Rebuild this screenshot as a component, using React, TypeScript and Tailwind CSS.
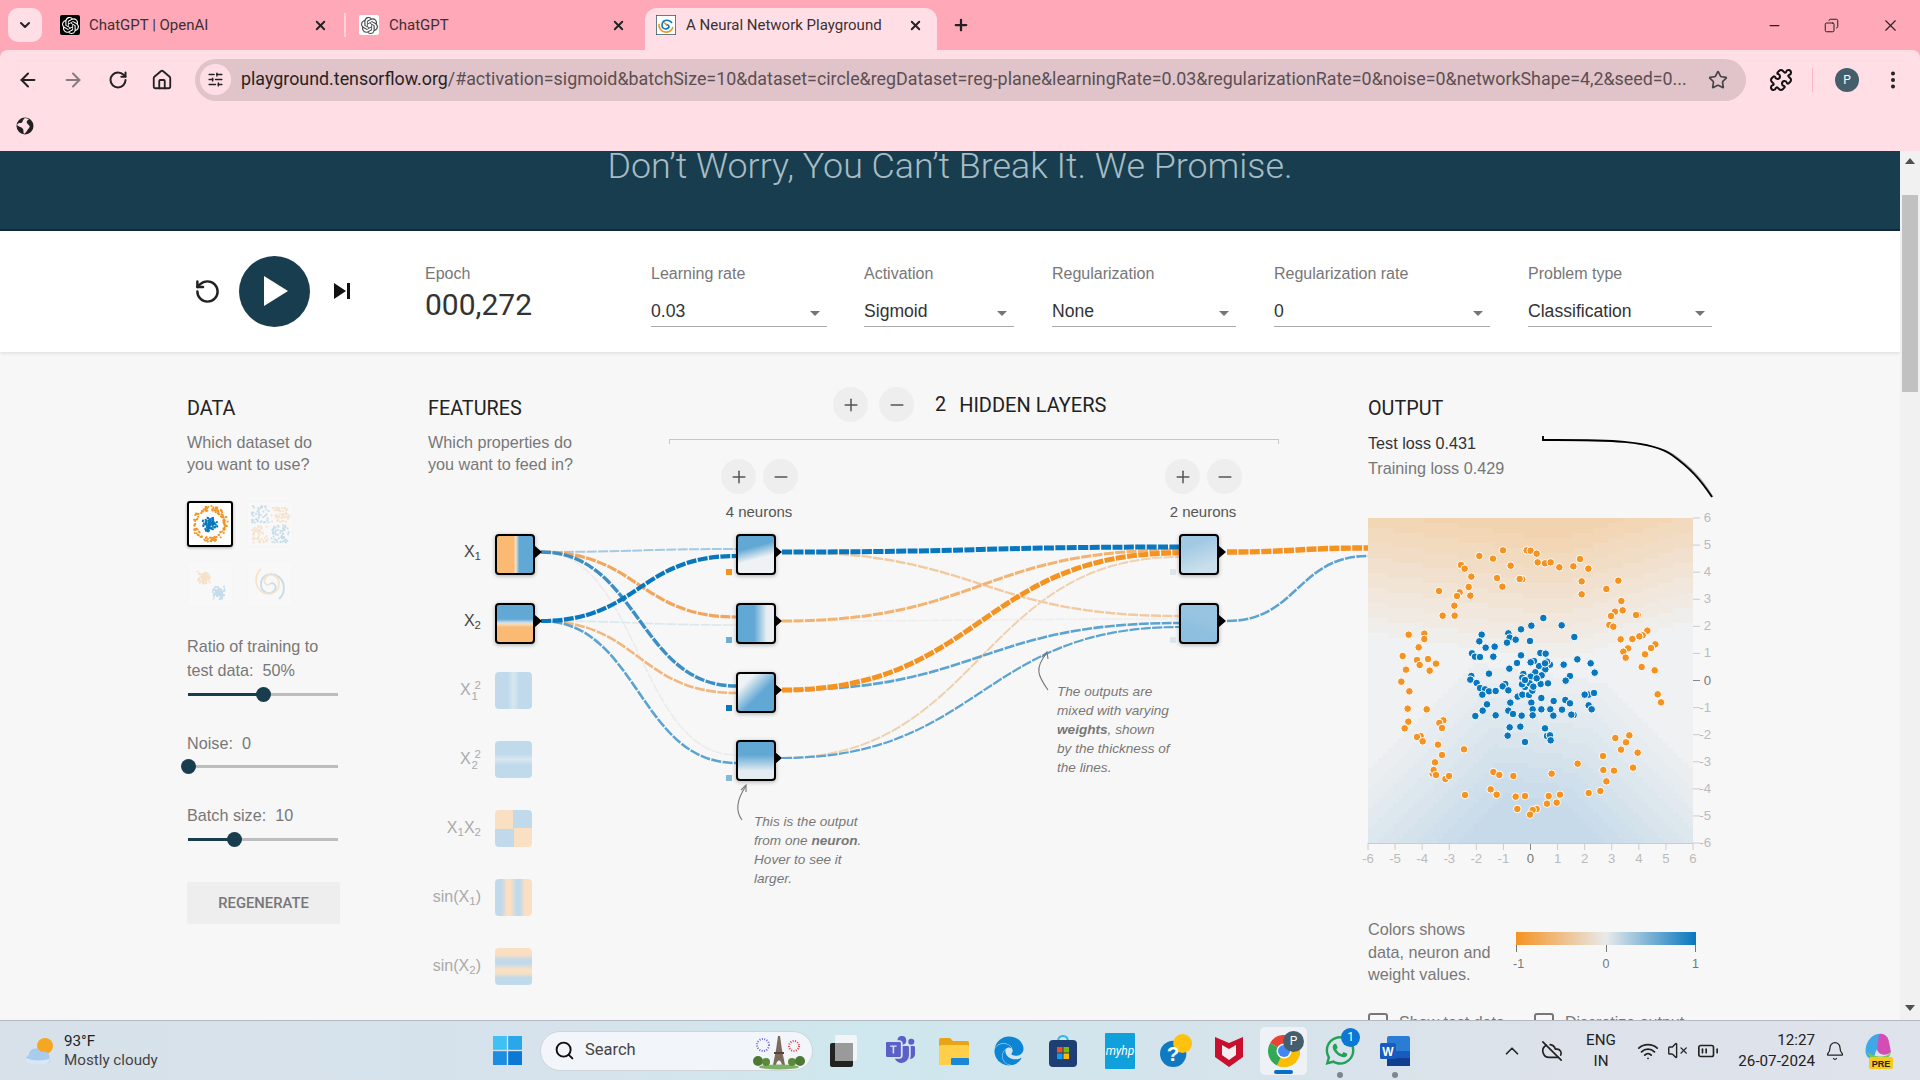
import React from 'react';
import { ArrowLeft, ArrowRight, RotateCw, House, Star, Puzzle, EllipsisVertical, SlidersHorizontal, ChevronDown, X, Plus, Minus, Copy, Search, ChevronUp, CloudOff, Wifi, VolumeX, BatteryMedium, Bell, RotateCcw } from 'lucide-react';
import { SiOpenai } from 'react-icons/si';
import { FaEdge, FaWhatsapp } from 'react-icons/fa';
import { BsMicrosoftTeams } from 'react-icons/bs';

const ARIAL = 'font-["Liberation_Sans",Arial,sans-serif]';

function rng(seed: number) {
  let s = seed;
  return () => {
    s = (s * 16807) % 2147483647;
    return (s - 1) / 2147483646;
  };
}

function Favicon({ kind }: { kind: 'dark' | 'light' | 'spiral' }) {
  if (kind === 'spiral') {
    return (
      <svg width="20" height="20" viewBox="0 0 20 20" className="shrink-0">
        <rect width="20" height="20" fill="#fff" stroke="#33525f" strokeWidth="1.5" />
        <path d="M10 10 a2 2 0 0 1 3 2 a4 4 0 0 1 -6 1 a5 5 0 0 1 1 -7 a6 6 0 0 1 8 2" fill="none" stroke="#0877bd" strokeWidth="1.6" />
        <path d="M10 10 a2 2 0 0 0 -2 -2 M3 9 a7 7 0 0 0 6 8 a7 7 0 0 0 8 -5" fill="none" stroke="#f59322" strokeWidth="1.6" />
      </svg>
    );
  }
  return (
    <div className={`w-5 h-5 shrink-0 flex items-center justify-center rounded-[2px] ${kind === 'dark' ? 'bg-black text-white' : 'bg-white text-[#444]'}`}>
      <SiOpenai size={17} />
    </div>
  );
}

function TabStrip() {
  return (
    <div className="h-[50px] bg-[#ffa9b8] flex items-end shrink-0 font-['Roboto',sans-serif] text-[15px] text-[#3b2f33]">
      <div className="w-[34px] h-[34px] ml-[8px] mb-[8px] rounded-[10px] bg-[#ffdfe5] flex items-center justify-center">
        <ChevronDown size={16} strokeWidth={3} className="text-[#222]" />
      </div>
      <div className="w-[302px] h-[42px] pl-[18px] pr-[16px] pb-[8px] flex items-center">
        <Favicon kind="dark" />
        <span className="ml-[9px] flex-1">ChatGPT | OpenAI</span>
        <X size={15} strokeWidth={3} className="text-[#222]" />
      </div>
      <div className="w-[2px] h-[24px] mb-[13px] bg-[#ffd3da]" />
      <div className="w-[299px] h-[42px] pl-[13px] pr-[19px] pb-[8px] flex items-center">
        <Favicon kind="light" />
        <span className="ml-[10px] flex-1">ChatGPT</span>
        <X size={15} strokeWidth={3} className="text-[#222]" />
      </div>
      <div className="w-[292px] h-[42px] pl-[11px] pr-[14px] pb-[8px] flex items-center bg-[#ffdfe5] rounded-t-[12px]">
        <Favicon kind="spiral" />
        <span className="ml-[10px] flex-1 text-[#3b2f33]">A Neural Network Playground</span>
        <X size={15} strokeWidth={3} className="text-[#222]" />
      </div>
      <div className="h-[42px] ml-[15px] pb-[8px] flex items-center">
        <Plus size={18} strokeWidth={3} className="text-[#222]" />
      </div>
      <div className="flex-1" />
      <div className="h-[50px] flex items-center pr-[20px] gap-[42px] text-[#222]">
        <Minus size={15} strokeWidth={2} />
        <Copy size={15} strokeWidth={1.6} className="-scale-x-100" />
        <X size={19} strokeWidth={1.4} />
      </div>
    </div>
  );
}

function Toolbar() {
  return (
    <div className="bg-[#ffdfe5] shrink-0 h-[101px] rounded-t-[8px] font-['Roboto',sans-serif]">
      <div className="h-[59px] flex items-center text-[#222]">
        <ArrowLeft size={22} strokeWidth={2.2} className="ml-[17px]" />
        <ArrowRight size={22} strokeWidth={2.2} className="ml-[23px] text-[#8a7b80]" />
        <RotateCw size={20} strokeWidth={2.4} className="ml-[24px]" />
        <House size={22} strokeWidth={2} className="ml-[23px]" />
        <div className="ml-[22px] w-[1551px] h-[42px] rounded-full bg-[#e0c4c9] flex items-center pl-[5px]">
          <div className="w-[31px] h-[31px] rounded-full bg-[#ffdfe5] flex items-center justify-center">
            <SlidersHorizontal size={17} strokeWidth={2} className="text-[#222]" />
          </div>
          <div className="ml-[10px] w-[1450px] text-[17.85px] whitespace-nowrap">
            <span className="text-[#2a1f22]">playground.tensorflow.org</span>
            <span className="text-[#5c4f53]">/#activation=sigmoid&amp;batchSize=10&amp;dataset=circle&amp;regDataset=reg-plane&amp;learningRate=0.03&amp;regularizationRate=0&amp;noise=0&amp;networkShape=4,2&amp;seed=0...</span>
          </div>
          <Star size={20} strokeWidth={2} className="ml-[17px] text-[#444]" />
        </div>
        <Puzzle size={24} strokeWidth={2} className="ml-[23px] text-[#111]" />
        <div className="ml-[19px] w-[1px] h-[24px] bg-[#ffb6c2]" />
        <div className="ml-[22px] w-[24px] h-[24px] rounded-full bg-[#455e6b] text-white text-[12px] flex items-center justify-center">P</div>
        <EllipsisVertical size={22} strokeWidth={2.4} className="ml-[23px] text-[#222]" />
      </div>
      <div className="h-[42px] pt-[8px] pl-[16px]">
        <svg width="18" height="18" viewBox="0 0 18 18">
          <circle cx="9" cy="9" r="8.5" fill="#202124" />
          <path d="M9 1 C6 3 7 6 5 6 C3 6 2 6 1 8 C3 10 6 10 7 12 C8 14 7 16 8 17 C11 15 11 13 13 11 C15 9 12 8 11 6 C10 4 12 3 13 2Z" fill="#ffdfe5" />
        </svg>
      </div>
    </div>
  );
}

function ControlSelect({ label, value, widthClass, mlClass }: { label: string; value: string; widthClass: string; mlClass: string }) {
  return (
    <div className={`${widthClass} ${mlClass} shrink-0`}>
      <div className="text-[16px] leading-[20px] text-[#777]">{label}</div>
      <div className="mt-[15px] h-[28px] border-b border-[#aaa] flex justify-between items-start pr-[7px]">
        <span className="text-[17.6px] leading-[22px] text-[#333] mt-[1px]">{value}</span>
        <svg width="10" height="5" viewBox="0 0 10 5" className="mt-[12px]"><path d="M0 0H10L5 5Z" fill="#757575" /></svg>
      </div>
    </div>
  );
}

function Controls() {
  return (
    <div className={`h-[121px] bg-white shrink-0 relative shadow-[0_1px_4px_rgba(0,0,0,0.12)] flex ${ARIAL}`}>
      <div className="flex items-center ml-[193px] -mt-[1px]">
        <RotateCcw size={27} strokeWidth={2.2} className="text-[#222] ml-[1px]" />
        <div className="ml-[18px] w-[71px] h-[71px] rounded-full bg-[#183d4e] flex items-center justify-center">
          <svg width="24" height="30" viewBox="0 0 24 30" className="ml-[3px]"><path d="M0 0L24 15L0 30Z" fill="#fff" /></svg>
        </div>
        <svg width="18" height="20" viewBox="0 0 18 20" className="ml-[24px]"><path d="M0 2L12 10L0 18Z" fill="#111" /><rect x="13" y="2" width="3" height="16" fill="#111" /></svg>
      </div>
      <div className="ml-[73px] w-[226px] shrink-0 pt-[33px]">
        <div className="text-[16px] leading-[20px] text-[#777]">Epoch</div>
        <div className="text-[30px] leading-[36px] mt-[3px] text-[#333] font-['Roboto',sans-serif]">000,272</div>
      </div>
      <div className="flex items-start pt-[33px]">
        <ControlSelect label="Learning rate" value="0.03" widthClass="w-[176px]" mlClass="ml-0" />
        <ControlSelect label="Activation" value="Sigmoid" widthClass="w-[150px]" mlClass="ml-[37px]" />
        <ControlSelect label="Regularization" value="None" widthClass="w-[184px]" mlClass="ml-[38px]" />
        <ControlSelect label="Regularization rate" value="0" widthClass="w-[216px]" mlClass="ml-[38px]" />
        <ControlSelect label="Problem type" value="Classification" widthClass="w-[184px]" mlClass="ml-[38px]" />
      </div>
    </div>
  );
}

function Thumb({ kind, active }: { kind: 'circle' | 'xor' | 'gauss' | 'spiral'; active?: boolean }) {
  const r = rng(kind.length * 7919 + 13);
  const dots: { x: number; y: number; c: string }[] = [];
  const O = '#f59322';
  const B = '#0877bd';
  if (kind === 'circle') {
    for (let i = 0; i < 130; i++) { const a = r() * 6.283; const d = 13 + r() * 5; dots.push({ x: 20 + Math.cos(a) * d, y: 20 + Math.sin(a) * d, c: O }); }
    for (let i = 0; i < 110; i++) { const a = r() * 6.283; const d = r() * 8; dots.push({ x: 20 + Math.cos(a) * d, y: 20 + Math.sin(a) * d, c: B }); }
  } else if (kind === 'xor') {
    for (let i = 0; i < 240; i++) { const x = 2 + r() * 37; const y = 2 + r() * 37; if (Math.abs(x - 20) < 1.2 || Math.abs(y - 20) < 1.2) continue; dots.push({ x, y, c: (x - 20) * (y - 20) > 0 ? B : O }); }
  } else if (kind === 'gauss') {
    for (let i = 0; i < 90; i++) dots.push({ x: 14 + (r() + r() - 1) * 7, y: 14 + (r() + r() - 1) * 7, c: O });
    for (let i = 0; i < 90; i++) dots.push({ x: 29 + (r() + r() - 1) * 7, y: 29 + (r() + r() - 1) * 7, c: B });
  }
  return (
    <div className={`w-[46px] h-[46px] rounded-[3px] bg-white flex items-center justify-center ${active ? 'border-2 border-black shadow-[0_1px_3px_rgba(0,0,0,0.3)]' : 'border border-[#eee] opacity-[0.2]'}`}>
      <svg width="42" height="42" viewBox="0 0 42 42">
        {dots.map((d, i) => <rect key={i} x={d.x} y={d.y} width="1.8" height="1.8" fill={d.c} />)}
        {kind === 'spiral' && (
          <g fill="none" strokeWidth="1.8">
            <path d="M21 21 C25 18 29 24 25 28 C20 33 12 29 12 21 C12 12 23 8 30 14 C37 20 36 31 30 36" stroke={B} />
            <path d="M21 21 C17 24 13 18 17 14 C22 9 30 13 30 21 C30 30 19 34 12 28 C5 22 6 11 12 6" stroke={O} />
          </g>
        )}
      </svg>
    </div>
  );
}

function Slider({ fill, thumb }: { fill: string; thumb: string }) {
  return (
    <div className="h-[16px] relative flex items-center w-[150px] ml-[1px]">
      <div className="w-full h-[3px] bg-[#bdbdbd] relative">
        <div className={`h-full bg-[#183d4e] ${fill}`} />
      </div>
      <div className={`absolute top-[0.5px] w-[15px] h-[15px] rounded-full bg-[#183d4e] ${thumb}`} />
    </div>
  );
}

function DataColumn() {
  return (
    <div className={`w-[241px] shrink-0 pt-[45px] ${ARIAL}`}>
      <div className="font-['Roboto',sans-serif] text-[19.8px] leading-[24px] text-[#222]">DATA</div>
      <div className="mt-[10px] text-[16.2px] leading-[22px] text-[#777]">Which dataset do<br />you want to use?</div>
      <div className="mt-[26px] grid grid-cols-[46px_46px] gap-x-[14px] gap-y-[14px]">
        <Thumb kind="circle" active />
        <Thumb kind="xor" />
        <Thumb kind="gauss" />
        <Thumb kind="spiral" />
      </div>
      <div className="mt-[27px] text-[16.2px] leading-[24px] text-[#777]">Ratio of training to<br />test data:&nbsp; 50%</div>
      <div className="mt-[4px]"><Slider fill="w-[50%]" thumb="left-[68px]" /></div>
      <div className="mt-[30px] text-[16.2px] leading-[22px] text-[#777]">Noise:&nbsp; 0</div>
      <div className="mt-[4px]"><Slider fill="w-0" thumb="left-[-7px]" /></div>
      <div className="mt-[30px] text-[16.2px] leading-[22px] text-[#777]">Batch size:&nbsp; 10</div>
      <div className="mt-[5px]"><Slider fill="w-[31%]" thumb="left-[39px]" /></div>
      <div className="mt-[35px] w-[153px] h-[42px] pt-[1px] rounded-[2px] bg-[#eeeeee] flex items-center justify-center font-['Roboto',sans-serif] font-medium text-[14.8px] text-[#777]">REGENERATE</div>
    </div>
  );
}

function Sc({ sub, sup }: { sub: string; sup?: string }) {
  if (sup) {
    return (
      <span className="inline-flex flex-col text-[11.5px] leading-[11px] align-middle ml-[1px]">
        <span className="ml-[3px]">{sup}</span>
        <span>{sub}</span>
      </span>
    );
  }
  return <sub className="text-[11.5px] leading-none">{sub}</sub>;
}

function FeatureRow({ label, tile, active }: { label: React.ReactNode; tile: string; active?: boolean }) {
  return (
    <div className="h-[42px] flex items-start">
      <div className={`w-[53px] h-[42px] flex items-center justify-end text-[16px] whitespace-nowrap -mt-[3px] ${active ? 'text-[#444]' : 'text-[#aaa]'}`}>
        <span>{label}</span>
      </div>
      <div className={`ml-[14px] ${tile} ${active ? 'w-[40px] h-[41px] border-2 border-black rounded-[4px] shadow-[0_1px_4px_rgba(0,0,0,0.3)]' : 'w-[37px] h-[37px] rounded-[4px]'}`} />
    </div>
  );
}

function FeaturesColumn() {
  return (
    <div className={`w-[140px] shrink-0 pt-[45px] ${ARIAL}`}>
      <div className="font-['Roboto',sans-serif] text-[19.8px] leading-[24px] text-[#222]">FEATURES</div>
      <div className="mt-[10px] text-[16.2px] leading-[22px] text-[#777] whitespace-nowrap">Which properties do<br />you want to feed in?</div>
      <div className="mt-[59px] flex flex-col gap-[27px]">
        <FeatureRow active label={<>X<Sc sub="1" /></>} tile="bg-[linear-gradient(to_right,#fbba74_47%,#f4e3cf_52%,#62a8d5_62%)]" />
        <FeatureRow active label={<>X<Sc sub="2" /></>} tile="bg-[linear-gradient(to_bottom,#62a8d5_38%,#cfe0ea_48%,#f8d9b6_52%,#fbba74_60%)]" />
        <FeatureRow label={<>X<Sc sub="1" sup="2" /></>} tile="bg-[linear-gradient(to_right,#c0daec_35%,#d9e7f0_50%,#c0daec_65%)]" />
        <FeatureRow label={<>X<Sc sub="2" sup="2" /></>} tile="bg-[linear-gradient(to_bottom,#c0daec_35%,#d9e7f0_50%,#c0daec_65%)]" />
        <FeatureRow label={<>X<Sc sub="1" />X<Sc sub="2" /></>} tile="bg-[conic-gradient(from_0deg_at_50%_50%,#c0daec_0_25%,#fbdfc2_25%_50%,#c0daec_50%_75%,#fbdfc2_75%)]" />
        <FeatureRow label={<>sin(X<Sc sub="1" />)</>} tile="bg-[linear-gradient(to_right,#c0daec_0%,#c0daec_18%,#fbdfc2_32%,#fbdfc2_42%,#c0daec_58%,#c0daec_68%,#fbdfc2_80%,#fbdfc2_100%)]" />
        <FeatureRow label={<>sin(X<Sc sub="2" />)</>} tile="bg-[linear-gradient(to_bottom,#fbdfc2_0%,#fbdfc2_18%,#c0daec_32%,#c0daec_42%,#fbdfc2_58%,#fbdfc2_68%,#c0daec_80%,#c0daec_100%)]" />
      </div>
    </div>
  );
}

function CircleBtn({ kind, pos }: { kind: 'plus' | 'minus'; pos: string }) {
  return (
    <div className={`w-[35px] h-[35px] rounded-full bg-[#eeeeee] flex items-center justify-center text-[#555] ${pos}`}>
      {kind === 'plus' ? <Plus size={20} strokeWidth={1.8} /> : <Minus size={20} strokeWidth={1.8} />}
    </div>
  );
}

type L = [number, number, number, number, string, number];
const LINKS: L[] = [
  [541, 552, 736, 755, '#ebebeb', 1.5],
  [541, 621, 736, 625, '#dbe7ee', 1.6],
  [541, 552, 736, 549, '#a4c9e2', 2],
  [541, 621, 736, 693, '#f2b67e', 2.6],
  [541, 621, 736, 763, '#5ba3d0', 2.6],
  [541, 552, 736, 617, '#f3a65a', 3.2],
  [541, 552, 736, 686, '#3b8fc4', 3.4],
  [541, 621, 736, 556, '#0877bd', 4.2],
  [782, 621, 1179, 619, '#eeeeee', 1.6],
  [782, 552, 1179, 616, '#f1ca9f', 2.4],
  [782, 758, 1179, 557, '#eed1af', 2],
  [782, 758, 1179, 627, '#5ba3d0', 2.2],
  [782, 690, 1179, 623, '#5ba3d0', 2.6],
  [782, 621, 1179, 550, '#f3b26f', 3],
  [782, 690, 1179, 553, '#f59322', 5],
  [782, 552, 1179, 547, '#0877bd', 5],
  [1227, 621, 1368, 556, '#5ba3d0', 2.6],
  [1227, 552, 1368, 548, '#f59322', 5.4],
];

function Links() {
  const tris: [number, number][] = [[535, 552], [535, 621], [775, 552], [775, 621], [775, 690], [775, 758], [1219, 552], [1219, 621]];
  return (
    <svg className="absolute left-0 top-0 pointer-events-none" width="940" height="668" viewBox="428 352 940 668">
      {LINKS.map(([x0, y0, x1, y1, c, w], i) => {
        const m = (x0 + x1) / 2;
        return <path key={i} d={`M${x0} ${y0} C${m} ${y0} ${m} ${y1} ${x1} ${y1}`} fill="none" stroke={c} strokeWidth={w} strokeDasharray="10 1.4" />;
      })}
      {tris.map(([x, y], i) => <polygon key={i} points={`${x},${y - 6} ${x + 7},${y} ${x},${y + 6}`} fill="#000" />)}
      <g fill="none" stroke="#777" strokeWidth="1.1">
        <path d="M742 820 C736 812 735 802 746 786" />
        <path d="M741 790 L746 785 L746 792" />
        <path d="M1048 690 C1038 676 1034 668 1047 653" />
        <path d="M1042 657 L1047 652 L1048 659" />
      </g>
    </svg>
  );
}

function Neuron({ pos, bg }: { pos: string; bg: string }) {
  return <div className={`absolute w-[40px] h-[41px] rounded-[4px] border-2 border-black shadow-[0_1px_4px_rgba(0,0,0,0.3)] ${pos} ${bg}`} />;
}
function Sq({ pos, color }: { pos: string; color: string }) {
  return <div className={`absolute w-[6px] h-[6px] ${pos} ${color}`} />;
}

function Network() {
  return (
    <div className={`relative w-[940px] h-[668px] shrink-0 flex ${ARIAL}`}>
      <FeaturesColumn />
      <div className="pt-[35px] ml-[265px] relative z-10 flex items-center h-[70px]">
        <CircleBtn kind="plus" pos="" />
        <CircleBtn kind="minus" pos="ml-[11px]" />
        <span className="ml-[21px] font-['Roboto',sans-serif] text-[19.8px] text-[#222]">2</span>
        <span className="ml-[13px] font-['Roboto',sans-serif] text-[20px] text-[#222]">HIDDEN LAYERS</span>
      </div>
      <div className="absolute left-[241px] top-[87px] w-[610px] h-[5px] border-t border-x border-[#c7c7c7]" />
      <Links />
      <CircleBtn kind="plus" pos="absolute left-[293px] top-[107px]" />
      <CircleBtn kind="minus" pos="absolute left-[335px] top-[107px]" />
      <CircleBtn kind="plus" pos="absolute left-[737px] top-[107px]" />
      <CircleBtn kind="minus" pos="absolute left-[779px] top-[107px]" />
      <div className="absolute left-[281px] top-[150px] w-[100px] text-center text-[15px] leading-[20px] text-[#555]">4 neurons</div>
      <div className="absolute left-[725px] top-[150px] w-[100px] text-center text-[15px] leading-[20px] text-[#555]">2 neurons</div>
      <Neuron pos="left-[308px] top-[182px]" bg="bg-[linear-gradient(165deg,#62a8d5_32%,#eef2f4_60%)]" />
      <Neuron pos="left-[308px] top-[251px]" bg="bg-[linear-gradient(to_right,#62a8d5_45%,#e8eef2_80%)]" />
      <Neuron pos="left-[308px] top-[320px]" bg="bg-[linear-gradient(135deg,#eef2f4_22%,#62a8d5_58%)]" />
      <Neuron pos="left-[308px] top-[388px]" bg="bg-[linear-gradient(to_bottom,#62a8d5_35%,#e4ecf1_78%)]" />
      <Neuron pos="left-[751px] top-[182px]" bg="bg-[linear-gradient(160deg,#a1c9e3_25%,#c9dfec_80%)]" />
      <Neuron pos="left-[751px] top-[251px]" bg="bg-[linear-gradient(20deg,#8ebfdf_30%,#99c4e1_70%)]" />
      <Sq pos="left-[298px] top-[217px]" color="bg-[#f59322]" />
      <Sq pos="left-[298px] top-[285px]" color="bg-[#6fadd6]" />
      <Sq pos="left-[298px] top-[353px]" color="bg-[#0877bd]" />
      <Sq pos="left-[298px] top-[423px]" color="bg-[#86b8da]" />
      <Sq pos="left-[742px] top-[217px]" color="bg-[#dde5ec]" />
      <Sq pos="left-[742px] top-[285px]" color="bg-[#dde5ec]" />
      <div className="absolute left-[326px] top-[460px] italic text-[13.6px] leading-[19px] text-[#777] whitespace-nowrap">
        This is the output<br />from one <b>neuron</b>.<br />Hover to see it<br />larger.
      </div>
      <div className="absolute left-[629px] top-[330px] italic text-[13.6px] leading-[19px] text-[#777] whitespace-nowrap">
        The outputs are<br />mixed with varying<br /><b>weights</b>, shown<br />by the thickness of<br />the lines.
      </div>
    </div>
  );
}

const ORANGE_PTS: [number, number][] = [[418,168],[459,176],[489,151],[512,197],[560,151],[572,152],[590,161],[593,187],[615,190],[632,187],[658,202],[700,199],[720,177],[745,206],[363,195],[374,206],[394,230],[386,261],[359,277],[351,288],[391,287],[297,273],[343,317],[308,347],[344,347],[471,234],[487,260],[547,238],[539,237],[725,244],[725,283],[835,242],[799,267],[844,303],[825,335],[848,331],[813,348],[893,344],[888,345],[808,375],[820,380],[922,392],[908,406],[898,409],[877,417],[842,418],[946,433],[933,444],[864,445],[850,455],[857,473],[915,463],[905,501],[944,511],[953,583],[963,607],[206,404],[253,401],[253,417],[236,442],[188,468],[231,480],[264,477],[288,491],[239,495],[198,509],[269,512],[184,545],[208,574],[203,626],[260,628],[205,665],[310,661],[298,669],[306,684],[194,685],[242,708],[231,711],[248,724],[294,734],[306,765],[372,748],[285,787],[278,821],[281,810],[288,825],[316,837],[327,828],[375,885],[460,816],[478,825],[520,828],[635,821],[452,868],[470,884],[527,890],[555,888],[626,888],[660,884],[746,879],[781,873],[799,844],[532,927],[590,927],[578,930],[570,944],[621,911],[650,908],[713,791],[789,768],[790,810],[822,812],[879,803],[893,758],[843,749],[858,727],[868,706],[826,714]];
const BLUE_PTS: [number, number][] = [[610,354],[574,377],[543,388],[665,376],[703,411],[425,404],[505,400],[509,413],[527,419],[418,424],[501,428],[570,423],[437,443],[464,440],[396,460],[405,470],[420,471],[460,470],[543,466],[601,459],[617,461],[712,478],[752,490],[671,494],[630,494],[597,498],[582,483],[570,487],[531,489],[508,506],[764,518],[447,521],[690,528],[677,542],[550,522],[586,517],[616,508],[605,526],[572,530],[547,533],[394,528],[391,539],[410,549],[420,564],[435,568],[447,574],[467,573],[496,552],[488,559],[505,571],[427,584],[533,590],[547,584],[567,585],[577,572],[555,561],[546,553],[569,550],[602,552],[624,550],[590,535],[746,584],[734,584],[762,579],[604,594],[641,603],[676,600],[690,610],[746,616],[755,628],[441,613],[428,632],[406,648],[467,646],[511,608],[505,632],[519,642],[545,647],[574,608],[578,628],[578,646],[604,628],[631,628],[640,647],[666,629],[701,645],[694,644],[509,682],[541,680],[615,685],[503,707],[555,726],[621,708],[630,706],[632,721],[621,485],[615,490],[572,487],[555,540],[580,560]];

function mix(a: number[], b: number[], t: number) {
  const c = a.map((v, i) => Math.round(v + (b[i] - v) * t));
  return `rgb(${c[0]},${c[1]},${c[2]})`;
}

function fieldColor(x: number, y: number) {
  const neutral = [240, 241, 242];
  const orange = [242, 211, 175];
  const blue = [198, 218, 233];
  const b = 0.6 - 0.15 * x;
  let s: number;
  if (y >= b) {
    s = (y - b) / 5 - Math.max(0, x - 1) * 0.09;
    s = Math.max(0, Math.min(1, s));
    s = Math.round(s * 9) / 9;
    return mix(neutral, orange, s);
  }
  const top = (b - y) / 5.2;
  const left = 0.45 + (x - y) * 0.15;
  const right = 0.45 + (-x - y) * 0.15;
  s = Math.max(0, Math.min(1, Math.min(top, left, right)));
  s = Math.round(s * 9) / 9;
  return mix(neutral, blue, s);
}

function Heatmap() {
  const cells: React.ReactNode[] = [];
  for (let j = 0; j < 65; j++) {
    for (let i = 0; i < 65; i++) {
      const x = -6 + ((i + 0.5) / 65) * 12;
      const y = 6 - ((j + 0.5) / 65) * 12;
      cells.push(<rect key={`${i}-${j}`} x={i * 5} y={j * 5} width="5" height="5" fill={fieldColor(x, y)} shapeRendering="crispEdges" />);
    }
  }
  const ticks = [-6, -5, -4, -3, -2, -1, 0, 1, 2, 3, 4, 5, 6];
  const st = 325 / 12;
  return (
    <svg width="360" height="352" viewBox="0 0 360 352" className="block mt-[20px] overflow-visible">
      {cells}
      {ticks.map((t) => (
        <g key={t} fontSize="13.2" fill={t === 0 ? '#777' : '#bbb'} fontFamily="Liberation Sans">
          <line x1="325" x2="332" y1={(6 - t) * st} y2={(6 - t) * st} stroke={t === 0 ? '#888' : '#ccc'} />
          <text x="343" y={(6 - t) * st + 4} textAnchor="end">{t}</text>
          <line x1={(t + 6) * st} x2={(t + 6) * st} y1="325" y2="332" stroke={t === 0 ? '#888' : '#ccc'} />
          <text x={(t + 6) * st} y="345" textAnchor="middle">{t}</text>
        </g>
      ))}
      <line x1="0" x2="325" y1="325.5" y2="325.5" stroke="#ccc" />
      {ORANGE_PTS.map(([px, py], i) => <circle key={`o${i}`} cx={px / 3 - 28} cy={py / 3 - 18} r="3.8" fill="#f59322" stroke="#fff" strokeWidth="1" />)}
      {BLUE_PTS.map(([px, py], i) => <circle key={`b${i}`} cx={px / 3 - 28} cy={py / 3 - 18} r="3.8" fill="#0877bd" stroke="#fff" strokeWidth="1" />)}
    </svg>
  );
}

function OutputColumn() {
  return (
    <div className={`w-[360px] shrink-0 pt-[45px] ${ARIAL}`}>
      <div className="font-['Roboto',sans-serif] text-[19.8px] leading-[24px] text-[#222]">OUTPUT</div>
      <div className="mt-[10px] flex h-[67px]">
        <div className="w-[174px] text-[16.2px] leading-[25px]">
          <div className="text-[#333]">Test loss 0.431</div>
          <div className="text-[#777]">Training loss 0.429</div>
        </div>
        <svg width="172" height="64" viewBox="0 0 172 64" className="mt-[4px]">
          <path d="M1 1 L1 5 C60 6 110 5 132 20 C150 33 160 44 171 62" fill="none" stroke="#aaa" strokeWidth="1.2" />
          <path d="M1 1 L1 5 C58 5 108 4 130 20 C148 33 158 44 170 62" fill="none" stroke="#000" strokeWidth="1.8" />
        </svg>
      </div>
      <Heatmap />
      <div className="mt-[48px] flex">
        <div className="w-[148px] text-[16.2px] leading-[22.5px] text-[#777]">Colors shows<br />data, neuron and<br />weight values.</div>
        <div className="w-[180px] pt-[14px]">
          <div className="h-[13px] bg-[linear-gradient(to_right,#f59322,#e8eaeb_50%,#0877bd)]" />
          <div className="h-[7px] flex justify-between">
            <div className="w-[1px] bg-[#777]" /><div className="w-[1px] bg-[#777]" /><div className="w-[1px] bg-[#777]" />
          </div>
          <div className="mt-[5px] flex justify-between text-[12.5px] leading-[14px] text-[#777] -mx-[3px]">
            <span>-1</span><span className="mr-[4px]">0</span><span>1</span>
          </div>
        </div>
      </div>
      <div className="mt-[27px] flex text-[16px] text-[#777]">
        <div className="w-[166px] flex"><div className="w-[20px] h-[20px] border-2 border-[#777] rounded-[3px]" /><span className="ml-[11px] leading-[20px]">Show test data</span></div>
        <div className="flex"><div className="w-[20px] h-[20px] border-2 border-[#777] rounded-[3px]" /><span className="ml-[11px] leading-[20px]">Discretize output</span></div>
      </div>
    </div>
  );
}

function Scrollbar() {
  return (
    <div className="w-[20px] shrink-0 bg-[#f1f1f1] flex flex-col items-center">
      <div className="h-[20px] w-full flex items-center justify-center">
        <svg width="10" height="6" viewBox="0 0 10 6"><path d="M5 0L10 6H0Z" fill="#505050" /></svg>
      </div>
      <div className="mt-[24px] w-[16px] h-[197px] bg-[#c1c1c1]" />
      <div className="flex-1" />
      <div className="h-[24px] w-full flex items-center justify-center">
        <svg width="10" height="6" viewBox="0 0 10 6"><path d="M5 6L10 0H0Z" fill="#505050" /></svg>
      </div>
    </div>
  );
}

function Page() {
  return (
    <div className="flex-1 min-h-0 flex">
      <div className="flex-1 min-w-0 flex flex-col overflow-hidden bg-[#f7f7f7]">
        <div className="h-[80px] shrink-0 bg-[#183d4e] border-b-2 border-[#0f2c3a] text-center font-['Roboto',sans-serif] font-light text-[35.8px] leading-[30px] text-[#a7bcc4] overflow-hidden">
          Don’t Worry, You Can’t Break It. We Promise.
        </div>
        <Controls />
        <div className="flex-1 min-h-0 flex pl-[187px] overflow-hidden">
          <DataColumn />
          <Network />
          <OutputColumn />
        </div>
      </div>
      <Scrollbar />
    </div>
  );
}

function TaskIcon({ ml, children }: { ml: string; children: React.ReactNode }) {
  return <div className={`${ml} w-[32px] h-[40px] flex items-center justify-center shrink-0 relative`}>{children}</div>;
}

function Taskbar() {
  return (
    <div className="h-[60px] shrink-0 border-t border-[#b4b9c2] bg-[linear-gradient(to_right,#d8e1ea_0%,#d6e3ec_30%,#cfe7ee_45%,#d3e4ec_58%,#dde2ea_80%,#dfe4ec_100%)] flex items-center font-['Roboto',sans-serif] text-[#222]">
      <svg width="40" height="36" viewBox="0 0 36 36" className="ml-[20px] shrink-0">
        <circle cx="23" cy="13" r="8" fill="#f5a623" />
        <path d="M9 31 C3 31 2 24 7 22 C7 15 16 13 19 19 C25 17 29 22 27 26 C29 30 26 31 24 31Z" fill="#a9cbee" />
        <path d="M9 31 C5 31 3 28 4 25 C10 28 20 28 27 26 C28 29 26 31 24 31Z" fill="#d7e7f7" />
      </svg>
      <div className="ml-[4px] w-[120px] text-[15.2px] leading-[19px]">
        <div>93°F</div>
        <div className="text-[#444]">Mostly cloudy</div>
      </div>
      <svg width="29" height="29" viewBox="0 0 29 29" className="ml-[309px] shrink-0">
        <rect width="13.8" height="13.8" fill="#3fc1f3" /><rect x="15.2" width="13.8" height="13.8" fill="#2aa6ea" />
        <rect y="15.2" width="13.8" height="13.8" fill="#1c8de0" /><rect x="15.2" y="15.2" width="13.8" height="13.8" fill="#0a78d4" />
      </svg>
      <div className="ml-[18px] w-[273px] h-[40px] rounded-full bg-[#f2f5f9] border border-[#cfd4dc] flex items-center pl-[13px] shrink-0">
        <Search size={21} strokeWidth={2.2} className="text-[#111]" />
        <span className="ml-[10px] w-[52px] text-[16.5px] text-[#444]">Search</span>
        <svg width="54" height="38" viewBox="0 0 54 38" className="ml-[115px]">
          <path d="M26 4 L28 4 L30 18 L33 33 L30 33 C29 27 25 27 24 33 L21 33 L24 18Z" fill="#7d6a5c" />
          <rect x="22" y="20" width="10" height="2" fill="#54453b" />
          <circle cx="11" cy="13" r="6" fill="none" stroke="#6a6ae0" strokeWidth="2" strokeDasharray="1 1.4" />
          <circle cx="42" cy="14" r="5" fill="none" stroke="#e33b4a" strokeWidth="2" strokeDasharray="1 1.4" />
          <ellipse cx="27" cy="35" rx="20" ry="2.5" fill="#7fb069" />
          <circle cx="6" cy="29" r="5" fill="#4c7a34" /><circle cx="14" cy="30" r="4" fill="#5c8a3a" />
          <circle cx="40" cy="30" r="4" fill="#5c8a3a" /><circle cx="48" cy="29" r="5" fill="#4c7a34" />
        </svg>
      </div>
      <TaskIcon ml="ml-[14px]">
        <svg width="30" height="36" viewBox="0 0 30 36">
          <rect x="2" y="10" width="23" height="24" rx="2" fill="#222" />
          <rect x="7" y="2" width="22" height="26" rx="2" fill="#f4f6f8" opacity="0.9" />
          <rect x="7" y="10" width="18" height="18" fill="#9a9a9a" />
        </svg>
      </TaskIcon>
      <TaskIcon ml="ml-[25px]"><BsMicrosoftTeams size={29} className="text-[#5b5fc7]" /></TaskIcon>
      <TaskIcon ml="ml-[22px]">
        <svg width="30" height="28" viewBox="0 0 30 28">
          <path d="M0 3 Q0 1 2 1 H11 L14 4 H28 Q30 4 30 6 V26 Q30 28 28 28 H2 Q0 28 0 26Z" fill="#e8a317" />
          <rect y="8" width="30" height="20" rx="2" fill="#ffcf4a" />
          <rect x="12" y="21" width="18" height="7" rx="1" fill="#1a86d9" />
        </svg>
      </TaskIcon>
      <TaskIcon ml="ml-[23px]"><FaEdge size={30} className="text-[#0c86d4]" /></TaskIcon>
      <TaskIcon ml="ml-[22px]">
        <svg width="28" height="32" viewBox="0 0 28 32">
          <path d="M9 7 Q9 1 14 1 Q19 1 19 7" fill="none" stroke="#35b5e8" strokeWidth="2" />
          <rect y="5" width="28" height="27" rx="4" fill="#1e3f73" />
          <rect x="8" y="12" width="5.5" height="5.5" fill="#f25022" /><rect x="14.5" y="12" width="5.5" height="5.5" fill="#7fba00" />
          <rect x="8" y="18.5" width="5.5" height="5.5" fill="#00a4ef" /><rect x="14.5" y="18.5" width="5.5" height="5.5" fill="#ffb900" />
        </svg>
      </TaskIcon>
      <TaskIcon ml="ml-[25px]">
        <div className="w-[30px] h-[36px] bg-[#10a0dc] text-white italic text-[12px] flex items-center justify-center rounded-[1px]">myhp</div>
      </TaskIcon>
      <TaskIcon ml="ml-[24px]">
        <svg width="34" height="36" viewBox="0 0 34 36">
          <circle cx="14" cy="21" r="14" fill="#0f7ac4" />
          <circle cx="24" cy="10" r="10" fill="#ffc20e" />
          <text x="14" y="29" fontSize="22" fontWeight="700" textAnchor="middle" fill="#fff" fontFamily="Liberation Sans">?</text>
        </svg>
      </TaskIcon>
      <TaskIcon ml="ml-[21px]">
        <svg width="28" height="32" viewBox="0 0 28 32">
          <path d="M0 2 L14 8 L28 2 V22 L14 32 L0 22Z" fill="#c8102e" />
          <path d="M7 10 L14 14 L21 10 V20 L14 25 L7 20Z" fill="#f4eef0" />
        </svg>
      </TaskIcon>
      <div className="ml-[15px] w-[47px] h-[48px] rounded-[5px] bg-[#eef2f6] flex items-center justify-center relative shrink-0">
        <svg width="32" height="32" viewBox="0 0 32 32">
          <path d="M16 16 L2.2 8 A16 16 0 0 1 30 8Z" fill="#ea4335" />
          <path d="M16 16 L30 8 A16 16 0 0 1 9 30.5Z" fill="#fbbc04" />
          <path d="M16 16 L9 30.5 A16 16 0 0 1 2.2 8Z" fill="#34a853" />
          <circle cx="16" cy="16" r="7.5" fill="#fff" /><circle cx="16" cy="16" r="6" fill="#4285f4" />
        </svg>
        <div className="absolute right-[3px] top-[4px] w-[21px] h-[21px] rounded-full bg-[#455e6b] text-white text-[12px] flex items-center justify-center">P</div>
        <div className="absolute bottom-[1px] left-[14px] w-[19px] h-[4px] rounded-full bg-[#0a6fc8]" />
      </div>
      <TaskIcon ml="ml-[17px]">
        <FaWhatsapp size={33} className="text-[#25a05a]" />
        <div className="absolute right-[-4px] top-[-3px] w-[19px] h-[19px] rounded-full bg-[#0a78d4] text-white text-[12px] flex items-center justify-center">1</div>
        <div className="absolute bottom-[-7px] left-[13px] w-[6px] h-[6px] rounded-full bg-[#7d8690]" />
      </TaskIcon>
      <TaskIcon ml="ml-[23px]">
        <svg width="30" height="30" viewBox="0 0 30 30">
          <rect x="7" width="23" height="30" rx="2" fill="#2b7cd3" />
          <rect x="7" y="15" width="23" height="8" fill="#185abd" /><rect x="7" y="22" width="23" height="8" fill="#103f91" />
          <rect y="7" width="16" height="16" rx="1.5" fill="#185abd" />
          <text x="8" y="20" fontSize="12" fontWeight="700" textAnchor="middle" fill="#fff" fontFamily="Liberation Sans">W</text>
        </svg>
        <div className="absolute bottom-[-7px] left-[13px] w-[6px] h-[6px] rounded-full bg-[#7d8690]" />
      </TaskIcon>
      <ChevronUp size={22} strokeWidth={1.8} className="ml-[90px] shrink-0" />
      <CloudOff size={22} strokeWidth={1.8} className="ml-[18px] shrink-0" />
      <div className="ml-[18px] w-[40px] text-center text-[15.2px] leading-[21px]">ENG<br />IN</div>
      <Wifi size={22} strokeWidth={2} className="ml-[16px] shrink-0" />
      <VolumeX size={21} strokeWidth={1.6} className="ml-[8px] shrink-0" />
      <BatteryMedium size={22} strokeWidth={1.8} className="ml-[9px] shrink-0" />
      <div className="ml-[10px] w-[86px] text-right text-[15.2px] leading-[21px]">12:27<br />26-07-2024</div>
      <Bell size={20} strokeWidth={1.5} className="ml-[10px] shrink-0" />
      <svg width="30" height="38" viewBox="0 0 30 38" className="ml-[18px] shrink-0">
        <path d="M3 22 C1 12 8 2 16 2 L22 3 C20 10 14 14 12 22 C11 28 5 28 3 22Z" fill="#3fa9e8" />
        <path d="M16 2 C22 1 25 5 26 10 L28 20 C24 24 17 24 14 18Z" fill="#d34db5" />
        <path d="M4 20 C10 24 22 28 28 20 C27 26 22 28 17 28 L8 27Z" fill="#7ac943" />
        <rect x="6" y="25" width="24" height="12" rx="2" fill="#f6c91e" />
        <text x="18" y="34.5" fontSize="9" fontWeight="700" textAnchor="middle" fill="#222" fontFamily="Liberation Sans">PRE</text>
      </svg>
    </div>
  );
}

export default function App() {
  return (
    <div className="w-[1920px] h-[1080px] flex flex-col overflow-hidden bg-[#ffa9b8]">
      <TabStrip />
      <Toolbar />
      <Page />
      <Taskbar />
    </div>
  );
}
